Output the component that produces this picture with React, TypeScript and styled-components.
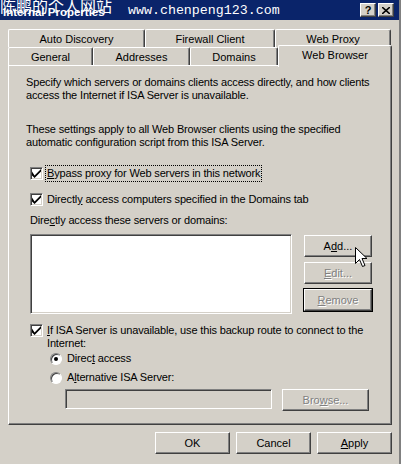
import styled, { createGlobalStyle, css } from 'styled-components';

const GlobalStyle = createGlobalStyle`
	html, body {
		margin: 0;
		padding: 0;
		background: #d4d0c8;
	}
	body {
		font-family: "Liberation Sans", Arial, sans-serif;
		font-size: 11px;
		color: #000;
	}
`;

const raised = css`
	border-top: 1px solid #fff;
	border-left: 1px solid #fff;
	border-right: 1px solid #404040;
	border-bottom: 1px solid #404040;
	box-shadow: inset -1px -1px 0 #808080;
`;

const sunken = css`
	border-top: 1px solid #808080;
	border-left: 1px solid #808080;
	border-right: 1px solid #fff;
	border-bottom: 1px solid #fff;
	box-shadow: inset 1px 1px 0 #404040, inset -1px -1px 0 #d4d0c8;
`;

const Window = styled.div`
	width: 401px;
	height: 464px;
	background: #d4d0c8;
	display: flex;
	flex-direction: column;
	position: relative;
	overflow: hidden;
	box-sizing: border-box;
	border-right: 2px solid #808080;
	white-space: nowrap;
`;

const TitleBar = styled.div`
	height: 20px;
	background: #0a246a;
	display: flex;
	align-items: center;
	position: relative;
	overflow: hidden;
	padding: 0 5px 0 3px;
`;

const TitleText = styled.span`
	color: #fff;
	font-weight: bold;
	font-size: 11.5px;
	width: 125px;
	padding-top: 3px;
`;

const Watermark = styled.span`
	position: absolute;
	left: 0;
	top: -7px;
	color: #fff;
	font-family: "Noto Sans CJK SC", sans-serif;
	font-size: 16px;
	white-space: nowrap;
`;

const SiteUrl = styled.span`
	color: #fff;
	font-family: "Liberation Mono", monospace;
	font-size: 13.3px;
	flex: 1;
`;

const CaptionButton = styled.div`
	width: 14px;
	height: 12px;
	background: #d4d0c8;
	${raised};
	display: flex;
	align-items: center;
	justify-content: center;
	font-weight: bold;
	font-size: 11px;
	margin-left: 2px;
	line-height: 1;
`;

const TabStrip = styled.div`
	padding: 9px 0 0 8px;
	display: flex;
	flex-direction: column;
`;

const TabRow = styled.div`
	display: flex;
	align-items: flex-end;
	height: 18px;
`;

const Tab = styled.div<{ $w: number; $active?: boolean }>`
	box-sizing: border-box;
	width: ${(p) => p.$w}px;
	height: 18px;
	border-top: 1px solid #fff;
	border-left: 1px solid #fff;
	border-right: 1px solid #404040;
	box-shadow: inset -1px 0 0 #808080;
	border-radius: 2px 2px 0 0;
	background: #d4d0c8;
	display: flex;
	align-items: center;
	justify-content: center;
	font-size: 11px;
	padding-top: 1px;
	${(p) => p.$active && css`
		height: 22px;
		margin-bottom: -2px;
		position: relative;
		z-index: 2;
		padding: 0 0 4px;
	`}
`;

const Panel = styled.div`
	box-sizing: border-box;
	margin-left: 8px;
	width: 384px;
	height: 360px;
	${raised};
	padding: 10px 0 0 17px;
	position: relative;
	z-index: 1;
	letter-spacing: -0.15px;
`;

const Paragraph = styled.p<{ $gap?: number }>`
	margin: ${(p) => p.$gap ?? 0}px 0 0;
	line-height: 13px;
	font-size: 11px;
`;

const CheckRow = styled.div<{ $gap: number }>`
	display: flex;
	align-items: flex-start;
	margin: ${(p) => p.$gap}px 0 0 4px;
	font-size: 11px;
	line-height: 13px;
`;

const CheckBox = styled.div`
	box-sizing: border-box;
	width: 13px;
	height: 13px;
	background: #fff;
	${sunken};
	flex: none;
	margin-right: 4px;
	display: flex;
	align-items: center;
	justify-content: center;
`;

const Radio = styled.div<{ $on?: boolean }>`
	box-sizing: border-box;
	width: 12px;
	height: 12px;
	border-radius: 50%;
	background: #fff;
	border: 1px solid;
	border-color: #808080 #fff #fff #808080;
	box-shadow: inset 1px 1px 0 #404040;
	flex: none;
	margin-right: 5px;
	display: flex;
	align-items: center;
	justify-content: center;

	&::after {
		content: "";
		width: 4px;
		height: 4px;
		border-radius: 50%;
		background: #000;
		display: ${(p) => (p.$on ? 'block' : 'none')};
	}
`;

const Focused = styled.span`
	outline: 1px dotted #000;
	outline-offset: 1px;
`;

const Label = styled.div<{ $gap: number }>`
	margin: ${(p) => p.$gap}px 0 0 4px;
	font-size: 11px;
	line-height: 13px;
`;

const ListRow = styled.div`
	display: flex;
	margin: 7px 0 0 4px;
	gap: 12px;
`;

const ListBox = styled.div`
	box-sizing: border-box;
	width: 262px;
	height: 80px;
	background: #fff;
	${sunken};
`;

const ButtonColumn = styled.div`
	display: flex;
	flex-direction: column;
	padding-top: 1px;
	gap: 5px;
	position: relative;
`;

const Button = styled.div<{ $w: number; $disabled?: boolean; $default?: boolean }>`
	box-sizing: border-box;
	width: ${(p) => p.$w}px;
	height: 22px;
	background: #d4d0c8;
	${raised};
	display: flex;
	align-items: center;
	justify-content: center;
	font-size: 11px;
	letter-spacing: 0;
	${(p) => p.$disabled && css`
		color: #808080;
		text-shadow: 1px 1px 0 #fff;
	`}
	${(p) => p.$default && css`
		outline: 1px solid #000;
		box-shadow: inset -1px -1px 0 #808080;
	`}
`;

const RadioRow = styled.div<{ $gap: number }>`
	display: flex;
	align-items: center;
	margin: ${(p) => p.$gap}px 0 0 24px;
	font-size: 11px;
	line-height: 13px;
`;

const InputRow = styled.div`
	display: flex;
	margin: 5px 0 0 39px;
	gap: 10px;
	align-items: flex-start;
`;

const TextInput = styled.div`
	box-sizing: border-box;
	width: 207px;
	height: 20px;
	background: #d4d0c8;
	${sunken};
`;

const Footer = styled.div`
	display: flex;
	justify-content: flex-end;
	gap: 6px;
	padding: 7px 7px 0 0;
`;

const Cursor = styled.svg`
	position: absolute;
	left: 51px;
	top: 13px;
	z-index: 5;
`;

const Check = () => (
	<svg width="9" height="9" viewBox="0 0 7 7">
		<path d="M0 2 L0 5 L2 7 L7 2 L7 0 L2 5 Z" fill="#000" />
	</svg>
);

const U = styled.span`
	text-decoration: underline;
`;

const App = () => {
	return (
		<>
			<GlobalStyle />
			<Window>
				<TitleBar>
					<TitleText>Internal Properties</TitleText>
					<Watermark>陈鹏的个人网站</Watermark>
					<SiteUrl>www.chenpeng123.com</SiteUrl>
					<CaptionButton>?</CaptionButton>
					<CaptionButton>
						<svg width="8" height="7" viewBox="0 0 8 7">
							<path d="M0 0 L8 7 M8 0 L0 7" stroke="#000" strokeWidth="1.6" />
						</svg>
					</CaptionButton>
				</TitleBar>

				<TabStrip>
					<TabRow>
						<Tab $w={137}>Auto Discovery</Tab>
						<Tab $w={130}>Firewall Client</Tab>
						<Tab $w={116}>Web Proxy</Tab>
					</TabRow>
					<TabRow>
						<Tab $w={85}>General</Tab>
						<Tab $w={97}>Addresses</Tab>
						<Tab $w={88}>Domains</Tab>
						<Tab $w={114} $active>Web Browser</Tab>
					</TabRow>
				</TabStrip>

				<Panel>
					<Paragraph>
						Specify which servers or domains clients access directly, and how clients
						<br />
						access the Internet if ISA Server is unavailable.
					</Paragraph>
					<Paragraph $gap={21}>
						These settings apply to all Web Browser clients using the specified
						<br />
						automatic configuration script from this ISA Server.
					</Paragraph>

					<CheckRow $gap={18}>
						<CheckBox><Check /></CheckBox>
						<Focused><U>B</U>ypass proxy for Web servers in this network</Focused>
					</CheckRow>
					<CheckRow $gap={13}>
						<CheckBox><Check /></CheckBox>
						<span>Directl<U>y</U> access computers specified in the Domains tab</span>
					</CheckRow>

					<Label $gap={8}>Dire<U>c</U>tly access these servers or domains:</Label>

					<ListRow>
						<ListBox />
						<ButtonColumn>
							<Button $w={68}>A<U>d</U>d...</Button>
							<Button $w={68} $disabled><U>E</U>dit...</Button>
							<Button $w={68} $disabled $default><U>R</U>emove</Button>
							<Cursor width="13" height="21" viewBox="0 0 13 21">
								<path
									d="M0.5 0.5 L0.5 16.5 L4.5 12.5 L7.5 19.5 L10 18.5 L7 11.5 L12 11.5 Z"
									fill="#fff"
									stroke="#000"
									strokeWidth="1"
								/>
							</Cursor>
						</ButtonColumn>
					</ListRow>

					<CheckRow $gap={10}>
						<CheckBox><Check /></CheckBox>
						<span>
							<U>I</U>f ISA Server is unavailable, use this backup route to connect to the
							<br />
							Internet:
						</span>
					</CheckRow>

					<RadioRow $gap={2}>
						<Radio $on />
						<span>Direc<U>t</U> access</span>
					</RadioRow>
					<RadioRow $gap={6}>
						<Radio />
						<span>A<U>l</U>ternative ISA Server:</span>
					</RadioRow>

					<InputRow>
						<TextInput />
						<Button $w={87} $disabled>Bro<U>w</U>se...</Button>
					</InputRow>
				</Panel>

				<Footer>
					<Button $w={75}>OK</Button>
					<Button $w={75}>Cancel</Button>
					<Button $w={75}><U>A</U>pply</Button>
				</Footer>
			</Window>
		</>
	);
};

export default App;
